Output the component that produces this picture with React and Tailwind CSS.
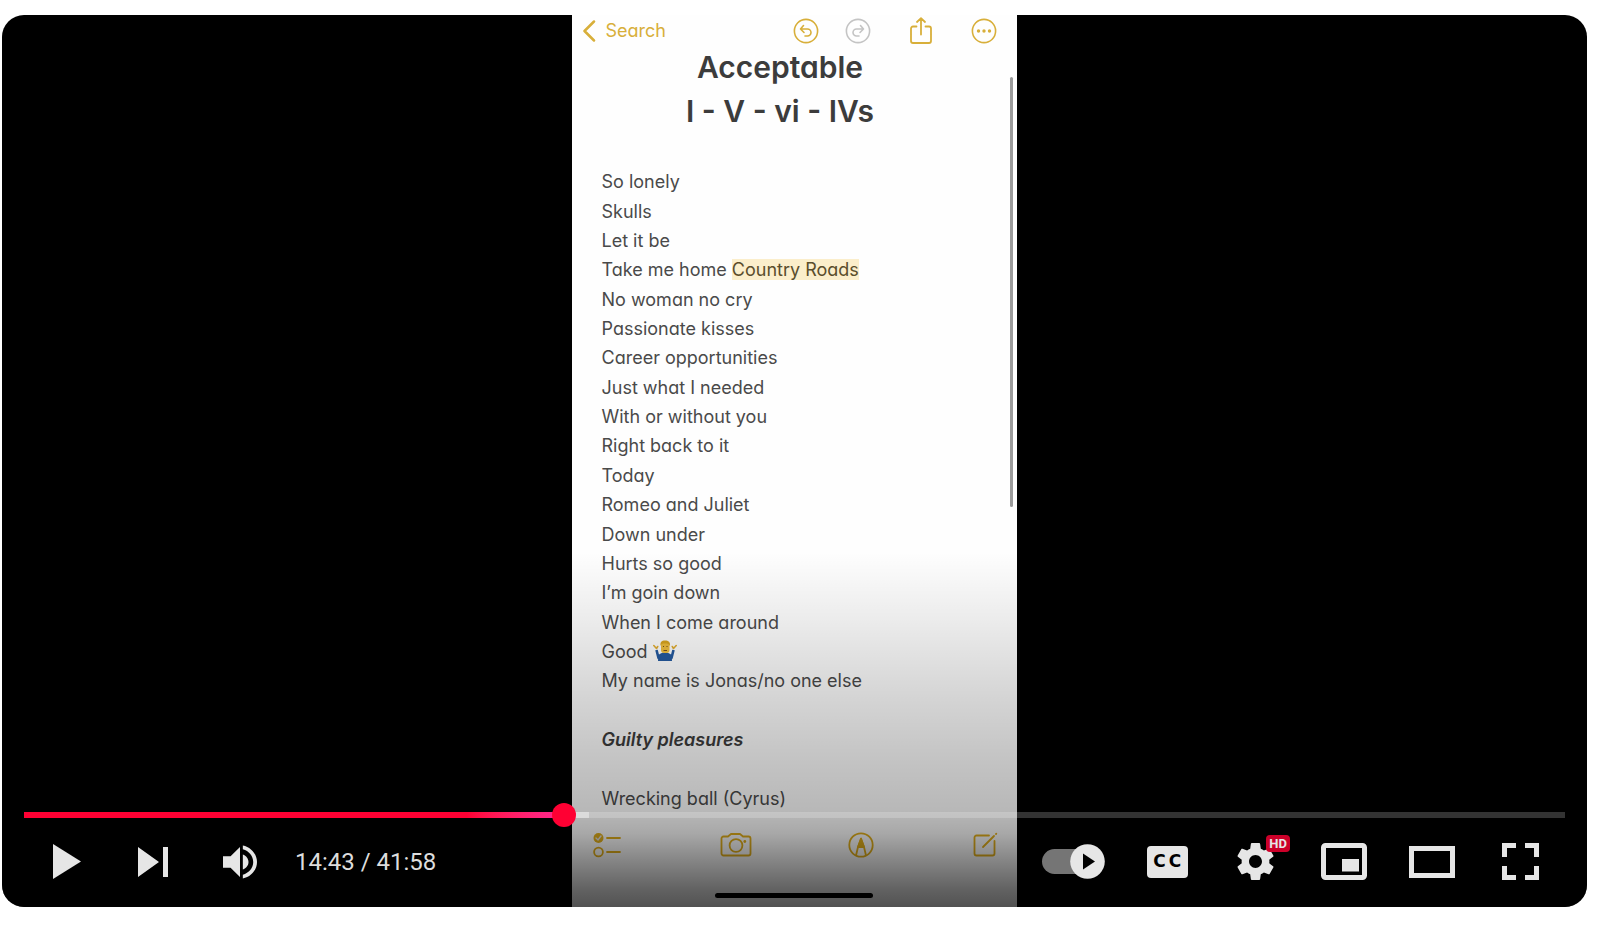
import { useState } from "react";

const SONGS = [
  "So lonely",
  "Skulls",
  "Let it be",
  { text: "Take me home ", mark: "Country Roads" },
  "No woman no cry",
  "Passionate kisses",
  "Career opportunities",
  "Just what I needed",
  "With or without you",
  "Right back to it",
  "Today",
  "Romeo and Juliet",
  "Down under",
  "Hurts so good",
  "I’m goin down",
  "When I come around",
  { text: "Good ", shrug: true },
  "My name is Jonas/no one else",
  "",
  { heading: "Guilty pleasures" },
  "",
  "Wrecking ball (Cyrus)",
];

const DURATION = 41 * 60 + 58;
const BUFFERED = 924;

function formatTime(seconds) {
  return `${Math.floor(seconds / 60)}:${String(seconds % 60).padStart(2, "0")}`;
}

function Shrug() {
  return (
    <svg className="inline-block align-[-4px]" width="24" height="22" viewBox="0 0 24 22" role="img" aria-label="man shrugging">
      <path d="M5 21c0-6 2-8.500 7-8.500s7 2.500 7 8.500z" fill="#245aa0" />
      <path d="M7 14.500 5.500 18 3.500 10M17 14.500l1.500 3.500 2-8" fill="none" stroke="#245aa0" strokeWidth="2.600" strokeLinejoin="round" />
      <path d="M3.500 8.500.800 5.500M3.500 8.500l1.200-2M20.500 8.500l2.700-3M20.500 8.500l-1.200-2" stroke="#e2ae32" strokeWidth="1.600" strokeLinecap="round" />
      <rect x="8" y="2" width="8.500" height="11" rx="3" fill="#efbe3c" />
      <path d="M7.500 6c-.5-4 1-5.500 4.500-5.500S17.500 2 17 6c-1-2-2-2.500-5-2.500S8.500 4 7.500 6z" fill="#d9a51e" />
      <path d="M10 6.500h1M13.500 6.500h1M10.500 10.500h3.500" stroke="#76501a" strokeWidth="1" />
    </svg>
  );
}

function NoteHeader() {
  return (
    <header className="flex h-8 shrink-0 items-center pl-2.5 pr-5 text-[#d8af3a]">
      <button type="button" className="flex items-center gap-2.5 text-lg">
        <svg width="14" height="22" viewBox="0 0 14 22" fill="none" stroke="currentColor" strokeWidth="2.500" strokeLinecap="round" strokeLinejoin="round">
          <path d="M12 1.500 2.500 11l9.500 9.500" />
        </svg>
        Search
      </button>
      <div className="ml-auto flex items-center">
        <button type="button" aria-label="Undo" className="mr-[26px]">
          <svg width="26" height="26" viewBox="0 0 26 26" fill="none" stroke="currentColor" strokeWidth="1.600" strokeLinecap="round" strokeLinejoin="round">
            <circle cx="13" cy="13" r="11.600" />
            <path d="M10.500 7.500 7.500 11l3.500 3.500M7.500 11h7a3.500 3.500 0 0 1 0 7H12" />
          </svg>
        </button>
        <button type="button" aria-label="Redo" disabled className="mr-[38px] text-[#c4c4c4]">
          <svg width="26" height="26" viewBox="0 0 26 26" fill="none" stroke="currentColor" strokeWidth="1.600" strokeLinecap="round" strokeLinejoin="round">
            <circle cx="13" cy="13" r="11.600" />
            <path d="m15.500 7.500 3 3.500-3.500 3.500M18.500 11h-7a3.500 3.500 0 0 0 0 7H14" />
          </svg>
        </button>
        <button type="button" aria-label="Share" className="mr-[38px]">
          <svg width="24" height="28" viewBox="0 0 24 28" fill="none" stroke="currentColor" strokeWidth="1.800" strokeLinecap="round" strokeLinejoin="round">
            <path d="M7.500 9.500H4a2 2 0 0 0-2 2V24a2 2 0 0 0 2 2h16a2 2 0 0 0 2-2V11.500a2 2 0 0 0-2-2h-3.500M12 17.500V1.500M8 5l4-3.800L16 5" />
          </svg>
        </button>
        <button type="button" aria-label="More">
          <svg width="26" height="26" viewBox="0 0 26 26" fill="none" stroke="currentColor" strokeWidth="1.600">
            <circle cx="13" cy="13" r="11.600" />
            <g fill="currentColor" stroke="none">
              <circle cx="7.500" cy="13" r="1.700" />
              <circle cx="13" cy="13" r="1.700" />
              <circle cx="18.500" cy="13" r="1.700" />
            </g>
          </svg>
        </button>
      </div>
    </header>
  );
}

function NoteToolbar() {
  return (
    <div className="flex h-16 shrink-0 items-center justify-between pl-5 pr-[18px] text-[#e3b01c]">
      <button type="button" aria-label="Checklist">
        <svg width="30" height="26" viewBox="0 0 30 26" fill="none" stroke="currentColor" strokeWidth="1.800" strokeLinecap="round">
          <circle cx="6.500" cy="6" r="5" fill="currentColor" stroke="none" />
          <path d="m4 6 2 2 3-4" stroke="#e4e4e4" strokeWidth="1.400" />
          <circle cx="6.500" cy="20" r="4.400" />
          <path d="M15 6h13M15 20h13" />
        </svg>
      </button>
      <button type="button" aria-label="Camera" className="ml-[70px]">
        <svg width="32" height="26" viewBox="0 0 32 26" fill="none" stroke="currentColor" strokeWidth="1.800" strokeLinejoin="round">
          <path d="M3.500 4.500H8L11 2h9l3 2.500h5.500A2 2 0 0 1 30.500 6.500v15a2 2 0 0 1-2 2h-25a2 2 0 0 1-2-2v-15a2 2 0 0 1 2-2z" />
          <circle cx="16" cy="13.500" r="6.400" />
          <circle cx="24.800" cy="9.500" r="1.400" fill="currentColor" stroke="none" />
        </svg>
      </button>
      <button type="button" aria-label="Markup" className="ml-[68px]">
        <svg width="26" height="26" viewBox="0 0 26 26" fill="none" stroke="currentColor" strokeWidth="1.800" strokeLinejoin="round">
          <circle cx="13" cy="13" r="11.700" />
          <path d="M8 23.500 10 15l3-8 3 8 2 8.500M10 15h6" />
          <path d="m13 6.500-3 8.500h6z" fill="currentColor" />
        </svg>
      </button>
      <button type="button" aria-label="New note" className="ml-[70px]">
        <svg width="26" height="26" viewBox="0 0 26 26" fill="none" stroke="currentColor" strokeWidth="1.800" strokeLinecap="round" strokeLinejoin="round">
          <path d="M17 3.500H4.500a2 2 0 0 0-2 2v16a2 2 0 0 0 2 2h16a2 2 0 0 0 2-2V9M11 15 22 4M24 2l.3-.3" />
        </svg>
      </button>
    </div>
  );
}

function Note() {
  return (
    <article className="relative mr-px flex w-[445px] flex-col overflow-hidden bg-[#fefefe] font-['Inter',sans-serif] text-[#4a4a4a] [font-feature-settings:'cv11']">
      <NoteHeader />
      <h1 className="flex flex-col gap-1 pr-7 text-center text-3xl leading-10 font-semibold text-[#3c3c3c]">
        <span>Acceptable</span>
        <span>I - V - vi - IVs</span>
      </h1>
      <ul className="mt-9 grid h-[646px] shrink-0 auto-rows-fr items-center pl-[30px] text-lg leading-[29px]">
        {SONGS.map((song, i) => (
          <li key={i}>
            {typeof song === "string" && song}
            {song.text}
            {song.mark && <mark className="bg-[#fbeecb] text-[#5a4d2c]">{song.mark}</mark>}
            {song.shrug && <Shrug />}
            {song.heading && <em className="font-semibold text-[#3c3c3c]">{song.heading}</em>}
          </li>
        ))}
      </ul>
      <NoteToolbar />
      <div className="mx-auto mt-4 h-[5px] w-[158px] shrink-0 rounded-full bg-black" />
      <div className="absolute right-1 top-[62px] h-[430px] w-[3px] rounded-full bg-[#9b9b9b]" />
    </article>
  );
}

function ProgressBar({ time, onSeek }) {
  const played = `${(time / DURATION) * 100}%`;

  return (
    <div className="relative mb-px h-1.5 bg-white/20">
      <div className="absolute inset-y-0 left-0 bg-white/40" style={{ width: `${(BUFFERED / DURATION) * 100}%` }} />
      <div className="absolute inset-y-0 left-0 bg-linear-to-r from-[#ff0033] from-82% to-[#ff2791]" style={{ width: played }} />
      <div className="absolute top-1/2 size-6 -translate-x-1/2 -translate-y-1/2 rounded-full bg-[#ff0033]" style={{ left: played }} />
      <input
        type="range"
        aria-label="Seek"
        className="absolute inset-0 w-full cursor-pointer opacity-0"
        min="0"
        max={DURATION}
        value={time}
        onChange={(e) => onSeek(Number(e.target.value))}
      />
    </div>
  );
}

function ControlButton({ label, children }) {
  return (
    <button type="button" aria-label={label} className="flex h-full cursor-pointer items-center justify-center">
      {children}
    </button>
  );
}

export default function App() {
  const [time, setTime] = useState(14 * 60 + 43);
  const [autoplay, setAutoplay] = useState(true);

  return (
    <main className="bg-white pl-0.5 pr-[13px] pt-[15px]">
      <section className="relative flex aspect-video w-full justify-center overflow-hidden rounded-[22px] bg-black">
        <Note />

        <div className="absolute inset-x-0 bottom-0 flex h-[366px] flex-col justify-end bg-[linear-gradient(to_bottom,rgba(0,0,0,0)_3%,rgba(0,0,0,0.07)_21%,rgba(0,0,0,0.165)_43%,rgba(0,0,0,0.23)_60%,rgba(0,0,0,0.28)_74%,rgba(0,0,0,0.34)_80%,rgba(0,0,0,0.47)_87%,rgba(0,0,0,0.61)_95%,rgba(0,0,0,0.68)_100%)] px-[22px] pb-0.5">
          <ProgressBar time={time} onSeek={setTime} />

          <div className="flex h-[86px] items-center text-[#e6e6e6]">
            <div className="grid h-full w-[259px] grid-cols-3">
              <ControlButton label="Play">
                <svg width="28" height="35" viewBox="0 0 28 35" fill="currentColor">
                  <path d="M0 0v35l28-17.500z" />
                </svg>
              </ControlButton>
              <ControlButton label="Next">
                <svg width="30" height="30" viewBox="0 0 30 30" fill="currentColor">
                  <path d="M0 0v30l21-15zM25 0h5v30h-5z" />
                </svg>
              </ControlButton>
              <ControlButton label="Mute">
                <svg width="34" height="34" viewBox="8 9 18 18" fill="currentColor">
                  <path d="M8 21h4l5 5V10l-5 5H8zM18.500 14v8c1.800-.68 3-2.230 3-4s-1.200-3.260-3-4z" />
                  <path d="M18.500 11.290C21.700 12.150 24 14.830 24 18s-2.300 5.850-5.500 6.710v2.060C22.800 25.860 26 22.280 26 18s-3.200-7.860-7.500-8.770z" />
                </svg>
              </ControlButton>
            </div>

            <div className="ml-3 font-['Roboto',sans-serif] text-2xl text-[#dddddd]">
              {formatTime(time)} / {formatTime(DURATION)}
            </div>

            <label className="relative ml-auto mr-[18px] flex h-9 w-[63px] cursor-pointer items-center">
              <input
                type="checkbox"
                role="switch"
                aria-label="Autoplay"
                className="absolute inset-0 opacity-0"
                checked={autoplay}
                onChange={(e) => setAutoplay(e.target.checked)}
              />
              <span className="h-[25px] w-12 rounded-full bg-[#757575]" />
              <svg className={autoplay ? "absolute right-0" : "absolute left-0"} width="35" height="35" viewBox="0 0 35 35">
                <circle cx="17.500" cy="17.500" r="17.300" fill="currentColor" />
                <path d="M13 9.500v16l12-8z" fill="#000" />
              </svg>
            </label>

            <div className="grid h-full w-[442px] grid-cols-5">
              <ControlButton label="Subtitles">
                <span className="flex h-8 w-[41px] items-center justify-center gap-[3px] rounded bg-[#e6e6e6] font-['DejaVu_Sans',sans-serif] text-[17px] font-bold leading-none text-black">
                  <span>C</span>
                  <span>C</span>
                </span>
              </ControlButton>
              <ControlButton label="Settings">
                <span className="relative">
                  <svg width="37" height="37" viewBox="10 10 16 16" fill="currentColor">
                    <path d="m 23.94,18.78 c .03,-0.25 .05,-0.51 .05,-0.78 0,-0.27 -0.02,-0.52 -0.05,-0.78 l 1.68,-1.32 c .15,-0.12 .19,-0.33 .09,-0.51 l -1.6,-2.76 c -0.09,-0.17 -0.31,-0.24 -0.48,-0.17 l -1.99,.8 c -0.41,-0.32 -0.86,-0.58 -1.35,-0.78 l -0.30,-2.12 c -0.02,-0.19 -0.19,-0.33 -0.39,-0.33 l -3.2,0 c -0.2,0 -0.36,.14 -0.39,.33 l -0.30,2.12 c -0.48,.2 -0.93,.47 -1.35,.78 l -1.99,-0.8 c -0.18,-0.07 -0.39,0 -0.48,.17 l -1.6,2.76 c -0.10,.17 -0.05,.39 .09,.51 l 1.68,1.32 c -0.03,.25 -0.05,.52 -0.05,.78 0,.26 .02,.52 .05,.78 l -1.68,1.32 c -0.15,.12 -0.19,.33 -0.09,.51 l 1.6,2.76 c .09,.17 .31,.24 .48,.17 l 1.99,-0.8 c .41,.32 .86,.58 1.35,.78 l .30,2.12 c .02,.19 .19,.33 .39,.33 l 3.2,0 c .2,0 .36,-0.14 .39,-0.33 l .30,-2.12 c .48,-0.2 .93,-0.47 1.35,-0.78 l 1.99,.8 c .18,.07 .39,0 .48,-0.17 l 1.6,-2.76 c .09,-0.17 .05,-0.39 -0.09,-0.51 l -1.68,-1.32 z m -5.94,2.01 c -1.54,0 -2.8,-1.25 -2.8,-2.8 0,-1.54 1.25,-2.8 2.8,-2.8 1.54,0 2.8,1.25 2.8,2.8 0,1.54 -1.25,2.8 -2.8,2.8 z" />
                  </svg>
                  <span className="absolute -right-4 -top-2 flex h-[17px] w-6 items-center justify-center rounded-sm bg-[#cc0029] font-['Roboto',sans-serif] text-[13px] font-bold leading-none">
                    HD
                  </span>
                </span>
              </ControlButton>
              <ControlButton label="Miniplayer">
                <svg width="46" height="37" viewBox="0 0 46 37" fill="none" stroke="currentColor" strokeWidth="5">
                  <rect x="2.500" y="2.500" width="41" height="32" rx="2" />
                  <path d="M21 16h17v12.500H21z" fill="currentColor" stroke="none" />
                </svg>
              </ControlButton>
              <ControlButton label="Theater mode">
                <svg width="46" height="32" viewBox="0 0 46 32" fill="none" stroke="currentColor" strokeWidth="5">
                  <path d="M2.500 2.500h41v27h-41z" />
                </svg>
              </ControlButton>
              <ControlButton label="Full screen">
                <svg width="37" height="37" viewBox="0 0 37 37" fill="none" stroke="currentColor" strokeWidth="5">
                  <path d="M2.500 14V2.500H14M23 2.500h11.500V14M34.500 23v11.500H23M14 34.500H2.500V23" />
                </svg>
              </ControlButton>
            </div>
          </div>
        </div>
      </section>
    </main>
  );
}
